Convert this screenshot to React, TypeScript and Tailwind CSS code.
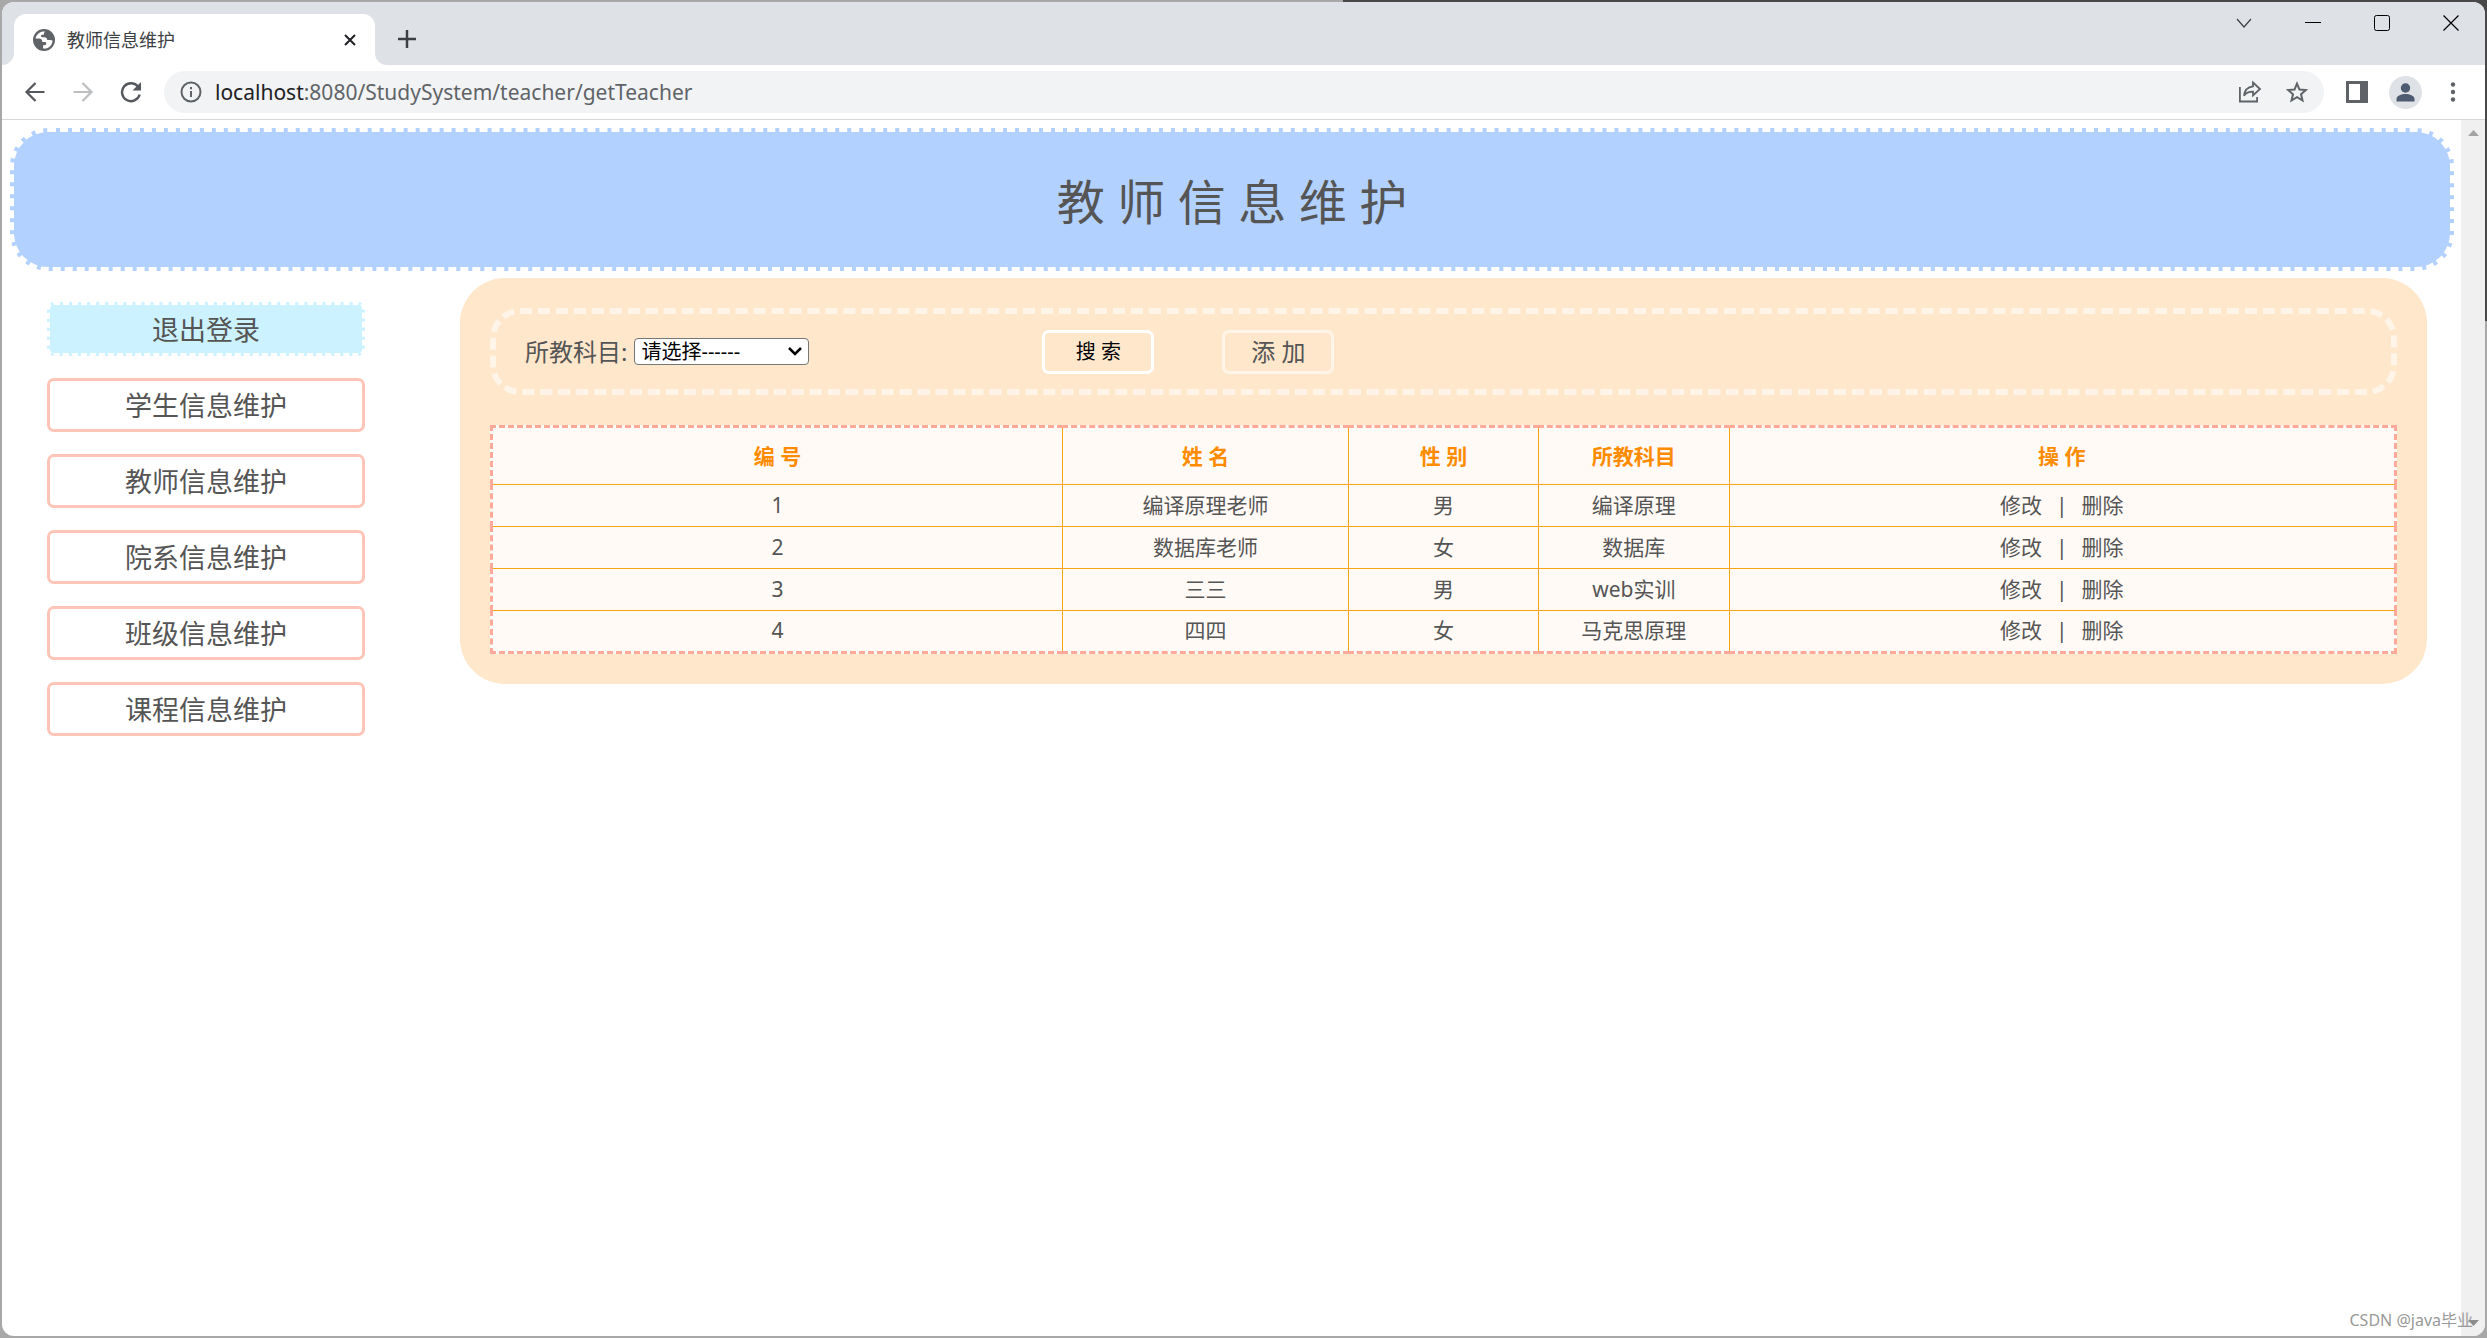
import { clsx } from 'clsx';

// Shared box of the window control buttons
const controlClass = 'flex h-8 w-[69px] items-center justify-center';

interface Teacher {
  id: number;
  name: string;
  gender: string;
  subject: string;
}

const teachers: Teacher[] = [
  { id: 1, name: '编译原理老师', gender: '男', subject: '编译原理' },
  { id: 2, name: '数据库老师', gender: '女', subject: '数据库' },
  { id: 3, name: '三三', gender: '男', subject: 'web实训' },
  { id: 4, name: '四四', gender: '女', subject: '马克思原理' },
];

const menuItems = ['学生信息维护', '教师信息维护', '院系信息维护', '班级信息维护', '课程信息维护'];

const columns = [
  { label: '编 号', width: 'w-[30%]' },
  { label: '姓 名', width: 'w-[15%]' },
  { label: '性 别', width: 'w-[10%]' },
  { label: '所教科目', width: 'w-[10%]' },
  { label: '操 作', width: 'w-[35%]' },
];

function TabStrip() {
  return (
    <div className="flex h-[63px] items-start bg-[#dee1e6]">
      <div className="flex self-stretch pt-3">
        <div className="flex w-3 items-end bg-[#dee1e6]">
          <svg className="h-3 w-3" viewBox="0 0 12 12" fill="#fff">
            <path d="M12 0v12H0A12 12 0 0 0 12 0z" />
          </svg>
        </div>
        <div className="flex w-[361px] items-center rounded-t-xl bg-white pr-[19px] pl-[19px]">
          <svg className="h-[22px] w-[22px]" viewBox="0 0 22 22">
            <circle cx="11" cy="11" r="11" fill="#5f6368" />
            <path
              d="M12.200 2.500C7.500 2 3.600 4.800 2.500 9.400h3.700c1.800 0 3 1 3 2.600v1h2.600c.9 0 1.500.6 1.500 1.500 0 1.100-.8 1.700-1.700 1.700h-1.500v3.200c5 .8 9.200-2.900 9.500-7.700-.7-.6-1.500-.8-2.300-.8h-3c-.3-1.900-1.300-2.700-2.900-2.700H9.300c-.9 0-1.300-.5-1.300-1.200s.5-1.200 1.300-1.200h1.500c0-1.600.5-2.600 1.400-3.300z"
              fill="#fff"
            />
          </svg>
          <span className="ml-3 flex-1 pt-px text-[18px] text-[#3c4043]">教师信息维护</span>
          <button aria-label="关闭标签页">
            <svg className="h-3 w-3" viewBox="0 0 12 12" stroke="#202124" strokeWidth="2">
              <path d="M1 1l10 10M11 1L1 11" />
            </svg>
          </button>
        </div>
        <div className="flex w-3 items-end">
          <svg className="h-3 w-3" viewBox="0 0 12 12" fill="#fff">
            <path d="M0 0v12h12A12 12 0 0 1 0 0z" />
          </svg>
        </div>
      </div>
      <button aria-label="新标签页" className="mt-7 ml-[11px]">
        <svg className="h-[18px] w-[18px]" viewBox="0 0 18 18" stroke="#3c4043" strokeWidth="2.500">
          <path d="M9 0v18M0 9h18" />
        </svg>
      </button>
      <div className="mt-[5px] ml-auto flex">
        <button aria-label="搜索标签页" className={controlClass}>
          <svg className="h-4 w-4" viewBox="0 0 16 16" fill="none" stroke="#3c4043" strokeWidth="1.200">
            <path d="M1 4l7 8 7-8" />
          </svg>
        </button>
        <button aria-label="最小化" className={controlClass}>
          <svg className="h-4 w-4" viewBox="0 0 16 16" stroke="#000" strokeWidth="1">
            <path d="M0 7.500h16" />
          </svg>
        </button>
        <button aria-label="最大化" className={controlClass}>
          <svg className="h-4 w-4" viewBox="0 0 16 16" fill="none" stroke="#000" strokeWidth="1">
            <rect x=".5" y=".5" width="15" height="15" rx="2" />
          </svg>
        </button>
        <button aria-label="关闭" className={controlClass}>
          <svg className="h-4 w-4" viewBox="0 0 16 16" stroke="#000" strokeWidth="1.200">
            <path d="M.5.5l15 15M15.500.5l-15 15" />
          </svg>
        </button>
      </div>
    </div>
  );
}

function Toolbar() {
  return (
    <div className="flex h-[55px] items-center border-b border-[#d5d7da] bg-white pl-[22px]">
      <button aria-label="后退">
        <svg className="h-[22px] w-[22px]" viewBox="0 0 22 22" fill="none" stroke="#54575b" strokeWidth="2.200">
          <path d="M20.500 11H3M11.500 2L2.500 11l9 9" />
        </svg>
      </button>
      <button aria-label="前进" className="ml-[26px]">
        <svg className="h-[22px] w-[22px]" viewBox="0 0 22 22" fill="none" stroke="#bbbdbf" strokeWidth="2.200">
          <path d="M1.500 11H19M10.500 2l9 9-9 9" />
        </svg>
      </button>
      <button aria-label="重新加载" className="ml-[26px]">
        <svg className="h-[22px] w-[22px]" viewBox="0 0 22 22" fill="none" stroke="#54575b" strokeWidth="2.400">
          <path d="M18.500 6.200A9 9 0 1 0 19.700 13.500" />
          <path d="M21 1v8.500h-8.500z" fill="#54575b" stroke="none" />
        </svg>
      </button>
      <div className="ml-[22px] flex h-[42px] flex-1 items-center rounded-full bg-[#f1f3f4] pr-4 pl-4">
        <svg className="h-[22px] w-[22px]" viewBox="0 0 22 22" fill="none" stroke="#5f6368" strokeWidth="2">
          <circle cx="11" cy="11" r="9.500" />
          <path d="M11 10v6M11 6v2.200" />
        </svg>
        <span className="ml-[13px] flex-1 pt-px text-[21px] text-[#5f6368]">
          <span className="text-[#202124]">localhost</span>:8080/StudySystem/teacher/getTeacher
        </span>
        <button aria-label="分享">
          <svg className="h-6 w-6" viewBox="0 0 24 24" fill="none" stroke="#5f6368" strokeWidth="1.800">
            <path d="M1.900 7v14.500h17.200V17" />
            <path d="M15 2.500l7 6.500-7 6.500v-3.800c-4 0-7 1-9 4 .5-5 3.500-8.700 9-9.400z" />
          </svg>
        </button>
        <button aria-label="收藏" className="ml-6">
          <svg className="h-[22px] w-[22px]" viewBox="0 0 22 22" fill="none" stroke="#5f6368" strokeWidth="2">
            <path d="M11 2.600l2.500 6 6.300.5-4.800 4.200 1.500 6.200L11 16.200l-5.500 3.300L7 13.300 2.200 9.100l6.300-.5z" />
          </svg>
        </button>
      </div>
      <button aria-label="侧边栏" className="ml-[22px]">
        <svg className="h-[22px] w-[22px]" viewBox="0 0 22 22">
          <path d="M0 0h22v22H0zM3 3v16h11V3z" fill="#5f6368" fillRule="evenodd" />
        </svg>
      </button>
      <button aria-label="用户" className="ml-[21px]">
        <svg className="h-[33px] w-[33px]" viewBox="0 0 33 33">
          <circle cx="16.500" cy="16.500" r="16.500" fill="#dee1e6" />
          <circle cx="16.500" cy="12" r="4.700" fill="#4f5b70" />
          <path d="M7.500 25.500v-2.500c0-3.500 5-5 9-5s9 1.500 9 5v2.500z" fill="#4f5b70" />
        </svg>
      </button>
      <button aria-label="更多" className="mr-[21px] ml-[20px]">
        <svg className="h-[22px] w-[22px]" viewBox="0 0 22 22" fill="#5f6368">
          <circle cx="11" cy="3.500" r="2.200" />
          <circle cx="11" cy="11" r="2.200" />
          <circle cx="11" cy="18.500" r="2.200" />
        </svg>
      </button>
    </div>
  );
}

function Sidebar() {
  return (
    <nav className="mt-6 ml-[37px] flex w-[318px] flex-col gap-[22px] text-center text-[27px] leading-[46px]">
      <a href="#logout" className="rounded-[7px] border-[3px] border-dashed border-white bg-[#ccf2ff] pt-[2px]">
        退出登录
      </a>
      {menuItems.map((item) => (
        <a key={item} href="#menu" className="rounded-[7px] border-[3px] border-[#ffc4b8] pt-[2px]">
          {item}
        </a>
      ))}
    </nav>
  );
}

function SearchForm() {
  return (
    <form className="flex h-[87px] items-center rounded-[30px] border-[6px] border-dashed border-[#fff4e8] pl-[29px]">
      <label htmlFor="subject" className="text-[24px]">
        所教科目:
      </label>
      <div className="relative ml-[7px] flex items-center">
        <select
          id="subject"
          className="h-[27px] w-[175px] appearance-none rounded-[4px] border border-[#767676] bg-white pl-[6px] text-[20px] leading-6 text-black"
        >
          <option>请选择------</option>
        </select>
        <svg
          className="pointer-events-none absolute right-[7px] h-[9px] w-[14px]"
          viewBox="0 0 14 9"
          fill="none"
          stroke="#000"
          strokeWidth="2.500"
        >
          <path d="M1 1l6 6 6-6" />
        </svg>
      </div>
      <button type="button" className="ml-[233px] h-11 w-28 rounded-[7px] border-[3px] border-white text-[20px] text-black">
        搜 索
      </button>
      <button type="button" className="ml-[68px] h-11 w-28 rounded-[7px] border-[3px] border-[#fff4e8] text-[24px]">
        添 加
      </button>
    </form>
  );
}

function TeacherTable() {
  return (
    <table className="mt-[30px] w-full table-fixed border-collapse border-[3px] border-dashed border-[#ffa99b] bg-[#fffaf5] text-center text-[21px]">
      <thead>
        <tr className="h-[58px] text-[#ff8c00]">
          {columns.map((col) => (
            <th key={col.label} className={clsx(col.width, 'border border-[#f5a510] p-0 pt-[2px] font-bold')}>
              {col.label}
            </th>
          ))}
        </tr>
      </thead>
      <tbody>
        {teachers.map((teacher) => (
          <tr key={teacher.id} className="h-[42px]">
            <td className="border border-[#f5a510] p-0">{teacher.id}</td>
            <td className="border border-[#f5a510] p-0">{teacher.name}</td>
            <td className="border border-[#f5a510] p-0">{teacher.gender}</td>
            <td className="border border-[#f5a510] p-0">{teacher.subject}</td>
            <td className="border border-[#f5a510] p-0">
              <div className="flex justify-center gap-[14px]">
                <a href="#edit">修改</a>
                <span>|</span>
                <a href="#delete">删除</a>
              </div>
            </td>
          </tr>
        ))}
      </tbody>
    </table>
  );
}

export default function App() {
  return (
    <div className="flex min-h-screen bg-[#a8a8a8] bg-[linear-gradient(#484848,#484848)] bg-[length:46%_24%] bg-right-top bg-no-repeat p-[2px] font-['Noto_Sans','Noto_Sans_CJK_SC',sans-serif]">
      <div className="flex flex-1 flex-col overflow-hidden rounded-xl bg-white">
        <TabStrip />
        <Toolbar />
        <div className="flex flex-1">
          <div className="flex-1 pt-2 pr-[7px] pl-2 text-[#555]">
            <header className="flex h-[143px] items-center justify-center rounded-[38px] border-4 border-dashed border-white bg-[#b2d1ff] pt-[5px]">
              <h1 className="text-[48px]">教 师 信 息 维 护</h1>
            </header>
            <div className="mt-[7px] flex items-start">
              <Sidebar />
              <main className="mr-[27px] ml-[95px] flex-1 rounded-[45px] bg-[#ffe7cc] px-[30px] py-[30px]">
                <SearchForm />
                <TeacherTable />
              </main>
            </div>
          </div>
          {/* Scrollbar track */}
          <div className="relative flex w-6 flex-col items-center justify-between bg-[#f0f0f0] py-[10px]">
            <svg className="h-[6px] w-[11px]" viewBox="0 0 11 6" fill="#a3a3a3">
              <path d="M5.500 0L11 6H0z" />
            </svg>
            <svg className="h-[6px] w-[11px]" viewBox="0 0 11 6" fill="#8b8b8b">
              <path d="M0 0h11L5.500 6z" />
            </svg>
            <span className="absolute right-3 bottom-1 text-[16px] whitespace-nowrap text-[#999]">CSDN @java毕业</span>
          </div>
        </div>
      </div>
    </div>
  );
}
